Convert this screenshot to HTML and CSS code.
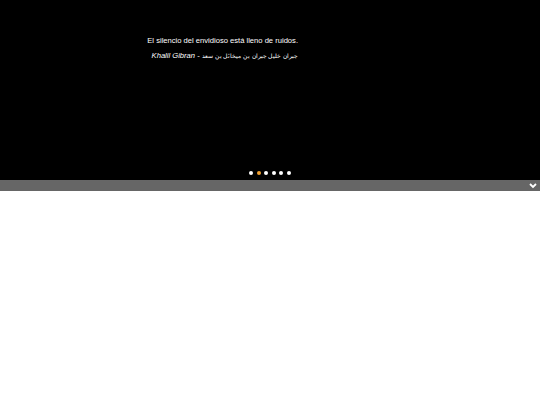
FILE: index.html
```html
<!DOCTYPE html>
<html>
<head>
<meta charset="utf-8">
<link rel="stylesheet" href="styles.css">
</head>
<body>
<div class="hero">
  <div class="quote">
    <p class="text">El silencio del envidioso está lleno de ruidos.</p>
    <p class="author"><em>Khalil Gibran</em> - <span class="ar" dir="rtl">جبران خليل جبران بن ميخائل بن سعد</span></p>
  </div>
  <div class="dots">
    <span class="dot"></span><span class="dot active"></span><span class="dot"></span><span class="dot"></span><span class="dot"></span><span class="dot"></span>
  </div>
</div>
<div class="bar">
  <svg class="chev" width="8" height="6" viewBox="0 0 8 6"><path d="M1 1 L4 4 L7 1" fill="none" stroke="#fff" stroke-width="1.8"/></svg>
</div>
</body>
</html>
```
FILE: styles.css
```css
html, body { margin: 0; padding: 0; background: #fff; }
body { font-family: "Liberation Sans", Arial, sans-serif; }
.hero {
  height: 180px;
  background: #000;
  display: flex;
  flex-direction: column;
  justify-content: space-between;
  box-sizing: border-box;
  padding: 36px 0 5px 146px;
}
.quote {
  display: flex;
  flex-direction: column;
  align-items: flex-end;
  width: 152px;
  color: #fff;
}
.quote p { margin: 0; font-size: 7.6px; line-height: 10px; white-space: nowrap; }
.quote .author { margin-top: 5px; }
.quote .ar { font-size: 6.1px; }
.dots {
  display: flex;
  gap: 3.5px;
  align-self: center;
  margin-left: -146px;
}
.dot { width: 4px; height: 4px; border-radius: 50%; background: #fff; }
.dot.active { background: #f0a030; }
.bar {
  height: 11px;
  background: #666;
  display: flex;
  justify-content: flex-end;
  align-items: center;
  padding-right: 3px;
}
.chev { display: block; }
```
